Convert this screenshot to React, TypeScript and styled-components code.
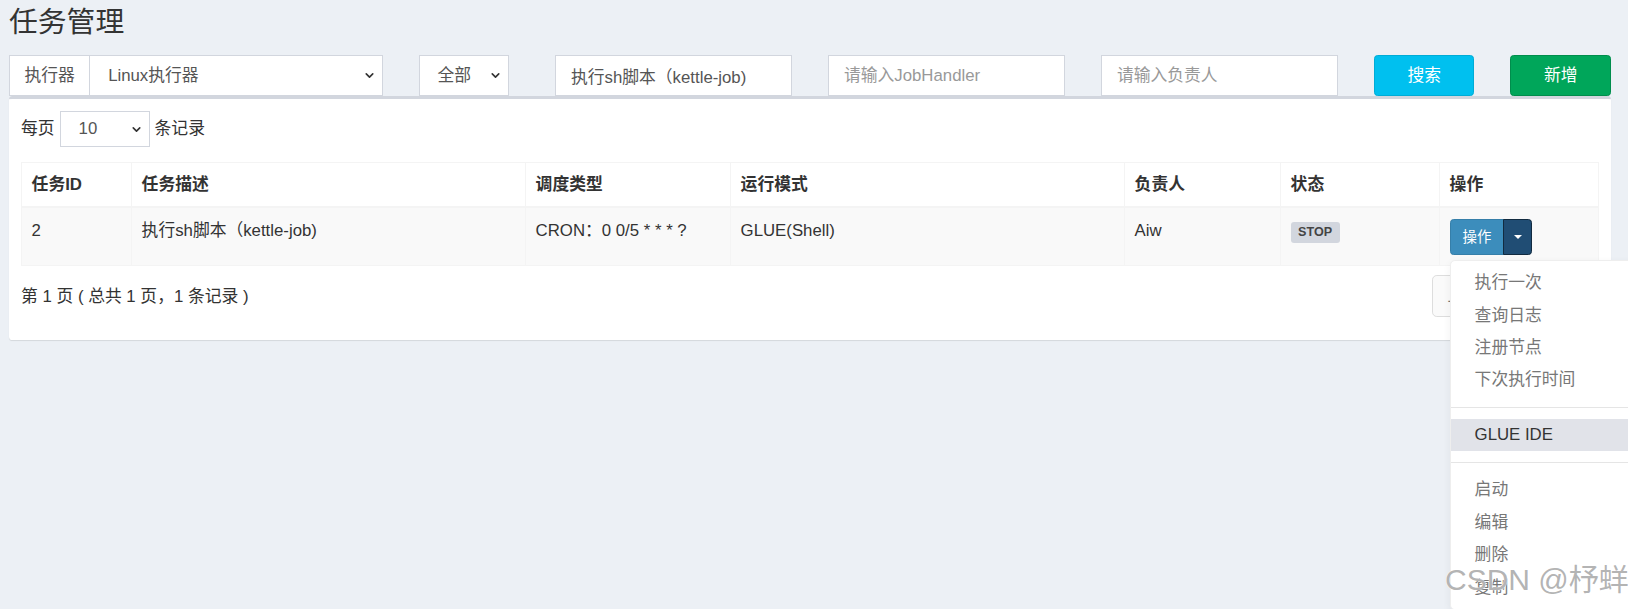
import styled, { createGlobalStyle } from 'styled-components';
import { ChevronDown } from 'lucide-react';

const GlobalStyle = createGlobalStyle`
  * { box-sizing: border-box; }
  html, body {
    margin: 0;
    padding: 0;
    background: #ecf0f5;
    overflow: hidden;
  }
  body {
    font-family: 'Liberation Sans', 'Noto Sans CJK SC', sans-serif;
    font-size: 16.8px;
    line-height: 24px;
    color: #333;
  }
`;

const Page = styled.div`
  position: relative;
  width: 1628px;
  height: 609px;
  padding: 6px 17px 0 9px;
`;

const Title = styled.h1`
  margin: 0;
  font-size: 28.8px;
  line-height: 33px;
  font-weight: 400;
  color: #333;
`;

const FilterRow = styled.div`
  display: flex;
  margin: 16px -18px 0;
`;

const Col = styled.div<{ $span: number }>`
  flex: 0 0 calc(100% / 12 * ${(p) => p.$span});
  padding: 0 18px;
`;

const InputGroup = styled.div`
  display: flex;
  height: 41px;
`;

const Addon = styled.span`
  display: flex;
  align-items: center;
  padding: 0 14.4px;
  background: #fff;
  border: 1px solid #d2d6de;
  border-right: 0;
  color: #555;
  white-space: nowrap;
`;

const SelectBox = styled.div<{ $w?: number; $h: number }>`
  display: flex;
  align-items: center;
  justify-content: space-between;
  flex: ${(p) => (p.$w ? '0 0 auto' : '1')};
  width: ${(p) => (p.$w ? `${p.$w}px` : 'auto')};
  height: ${(p) => p.$h}px;
  padding: 0 6px 0 18px;
  background: #fff;
  border: 1px solid #d2d6de;
  color: #555;
  white-space: nowrap;
`;

const TextInput = styled.input`
  display: block;
  width: 100%;
  height: 41px;
  padding: 0 15px;
  border: 1px solid #d2d6de;
  background: #fff;
  font: inherit;
  color: #555;
  outline: none;
  &::placeholder { color: #999; }
`;

const ActionButton = styled.button<{ $bg: string; $border: string }>`
  display: block;
  width: 100%;
  height: 41px;
  border-radius: 3.6px;
  border: 1px solid ${(p) => p.$border};
  background: ${(p) => p.$bg};
  color: #fff;
  font: inherit;
  cursor: pointer;
`;

const Box = styled.div`
  position: relative;
  background: #fff;
  border-top: 3.6px solid #d2d6de;
  border-radius: 3.6px;
  box-shadow: 0 1px 1px rgba(0, 0, 0, 0.1);
  padding: 12px 12px 21px;
`;

const LengthRow = styled.div`
  display: flex;
  align-items: center;
  gap: 5px;
`;

const Table = styled.table`
  width: 100%;
  margin-top: 15px;
  border-collapse: collapse;
  table-layout: fixed;
  border: 1px solid #f4f4f4;
`;

const Th = styled.th<{ $w: number }>`
  width: ${(p) => p.$w}px;
  padding: 9.6px;
  border: 1px solid #f4f4f4;
  border-bottom-width: 2px;
  text-align: left;
  font-weight: 700;
  vertical-align: bottom;
`;

const BodyRow = styled.tr`
  height: 58px;
  background: #f9f9f9;
`;

const Td = styled.td`
  padding: 10.5px 9.6px 9.6px;
  border: 1px solid #f4f4f4;
  vertical-align: top;
`;

const Label = styled.span`
  display: inline-block;
  padding: 1px 7.5px 2px;
  font-size: 12.6px;
  line-height: 18px;
  font-weight: 700;
  color: #444;
  background: #d2d6de;
  border-radius: 3px;
`;

const BtnGroup = styled.div`
  position: relative;
  display: inline-flex;
`;

const SmallBtn = styled.button`
  height: 36px;
  padding: 0 12px;
  background: #3c8dbc;
  border: 1px solid #367fa9;
  border-radius: 3.6px 0 0 3.6px;
  color: #fff;
  font: inherit;
  font-size: 14.4px;
`;

const CaretBtn = styled.button`
  display: flex;
  align-items: center;
  justify-content: center;
  width: 29px;
  height: 36px;
  margin-left: -1px;
  background: #204d74;
  border: 1px solid #122b40;
  border-radius: 0 3.6px 3.6px 0;
`;

const Caret = styled.span`
  width: 0;
  height: 0;
  border-top: 4.8px solid #fff;
  border-left: 4.2px solid transparent;
  border-right: 4.2px solid transparent;
`;

const Menu = styled.ul`
  position: absolute;
  top: 100%;
  left: 0;
  z-index: 10;
  min-width: 192px;
  margin: 5px 0 0;
  padding: 6px 0;
  list-style: none;
  background: #fff;
  border: 1px solid #eee;
  border-radius: 4.8px;
  box-shadow: 0 3px 8px rgba(0, 0, 0, 0.06);
`;

const MenuItem = styled.li<{ $active?: boolean }>`
  padding: 3.6px 24px;
  line-height: 25.2px;
  white-space: nowrap;
  color: ${(p) => (p.$active ? '#333' : '#777')};
  background: ${(p) => (p.$active ? '#e1e3e9' : 'transparent')};
`;

const Divider = styled.li`
  height: 1px;
  margin: 10.8px 0;
  background: #e5e5e5;
`;

const Footer = styled.div`
  display: flex;
  justify-content: space-between;
  align-items: flex-start;
  margin-top: 7px;
`;

const Info = styled.div`
  padding-top: 12px;
`;

const Pagination = styled.ul`
  display: flex;
  margin: 2.4px 0;
  padding: 0;
  list-style: none;
`;

const PageLink = styled.li<{ $first?: boolean; $last?: boolean; $current?: boolean }>`
  padding: 8px 14.4px;
  line-height: 24px;
  margin-left: ${(p) => (p.$first ? '0' : '-1px')};
  border: 1px solid #ddd;
  border-radius: ${(p) => (p.$first ? '4.8px 0 0 4.8px' : p.$last ? '0 4.8px 4.8px 0' : '0')};
  background: ${(p) => (p.$current ? '#3c8dbc' : '#fafafa')};
  color: ${(p) => (p.$current ? '#fff' : '#777')};
`;

const Watermark = styled.div`
  position: absolute;
  left: 1445px;
  top: 563px;
  font-family: 'Liberation Sans', 'Noto Sans CJK SC', sans-serif;
  font-size: 30px;
  line-height: 34px;
  color: rgba(160, 160, 160, 0.8);
  text-shadow: 0 0 1px #fff, 0 0 1px #fff;
  white-space: nowrap;
  pointer-events: none;
  z-index: 20;
`;

const columns: { title: string; w: number }[] = [
  { title: '任务ID', w: 110 },
  { title: '任务描述', w: 394 },
  { title: '调度类型', w: 205 },
  { title: '运行模式', w: 394 },
  { title: '负责人', w: 156 },
  { title: '状态', w: 159 },
  { title: '操作', w: 159 },
];

const Chevron = () => <ChevronDown size={13} strokeWidth={3} color="#333" />;

export default function App() {
  return (
    <Page>
      <GlobalStyle />
      <Title>任务管理</Title>

      <FilterRow>
        <Col $span={3}>
          <InputGroup>
            <Addon>执行器</Addon>
            <SelectBox $h={41}>
              Linux执行器
              <Chevron />
            </SelectBox>
          </InputGroup>
        </Col>
        <Col $span={1}>
          <SelectBox $w={90} $h={41}>
            全部
            <Chevron />
          </SelectBox>
        </Col>
        <Col $span={2}>
          <TextInput readOnly value="执行sh脚本（kettle-job)" />
        </Col>
        <Col $span={2}>
          <TextInput readOnly placeholder="请输入JobHandler" />
        </Col>
        <Col $span={2}>
          <TextInput readOnly placeholder="请输入负责人" />
        </Col>
        <Col $span={1}>
          <ActionButton $bg="#00c0ef" $border="#00acd6">搜索</ActionButton>
        </Col>
        <Col $span={1}>
          <ActionButton $bg="#00a65a" $border="#008d4c">新增</ActionButton>
        </Col>
      </FilterRow>

      <Box>
        <LengthRow>
          每页
          <SelectBox $w={90} $h={36}>
            10
            <Chevron />
          </SelectBox>
          条记录
        </LengthRow>

        <Table>
          <thead>
            <tr>
              {columns.map((c) => (
                <Th key={c.title} $w={c.w}>{c.title}</Th>
              ))}
            </tr>
          </thead>
          <tbody>
            <BodyRow>
              <Td>2</Td>
              <Td>执行sh脚本（kettle-job)</Td>
              <Td>CRON：0 0/5 * * * ?</Td>
              <Td>GLUE(Shell)</Td>
              <Td>Aiw</Td>
              <Td><Label>STOP</Label></Td>
              <Td>
                <BtnGroup>
                  <SmallBtn>操作</SmallBtn>
                  <CaretBtn><Caret /></CaretBtn>
                  <Menu>
                    <MenuItem>执行一次</MenuItem>
                    <MenuItem>查询日志</MenuItem>
                    <MenuItem>注册节点</MenuItem>
                    <MenuItem>下次执行时间</MenuItem>
                    <Divider />
                    <MenuItem $active>GLUE IDE</MenuItem>
                    <Divider />
                    <MenuItem>启动</MenuItem>
                    <MenuItem>编辑</MenuItem>
                    <MenuItem>删除</MenuItem>
                    <MenuItem>复制</MenuItem>
                  </Menu>
                </BtnGroup>
              </Td>
            </BodyRow>
          </tbody>
        </Table>

        <Footer>
          <Info>第 1 页 ( 总共 1 页，1 条记录 )</Info>
          <Pagination>
            <PageLink $first>上页</PageLink>
            <PageLink $current>1</PageLink>
            <PageLink $last>下页</PageLink>
          </Pagination>
        </Footer>
      </Box>

      <Watermark>CSDN @杼蛘</Watermark>
    </Page>
  );
}
